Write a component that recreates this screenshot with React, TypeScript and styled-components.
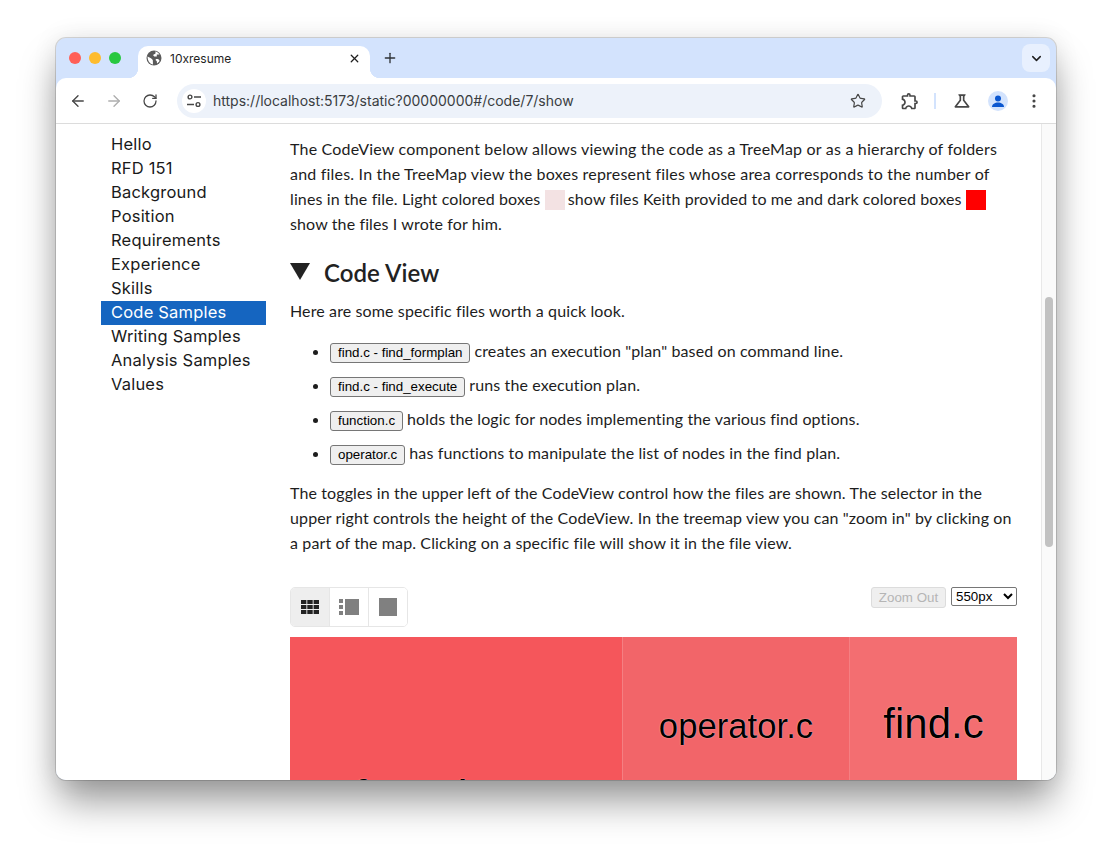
import styled, { createGlobalStyle } from 'styled-components';
import { ArrowLeft, ArrowRight, ChevronDown, EllipsisVertical, Plus, RotateCw, Star, X } from 'lucide-react';
import { MdOutlineExtension, MdOutlineScience } from 'react-icons/md';

const GlobalStyle = createGlobalStyle`
  html, body {
    margin: 0;
    background: #fff;
    overflow: hidden;
  }
`;

const Page = styled.div`
  width: 1112px;
  height: 854px;
  padding: 38px 56px 0;
  box-sizing: border-box;
`;

const WindowFrame = styled.div`
  border-radius: 10px;
  width: 1000px;
  box-shadow: 0 24px 38px -3px rgba(0, 0, 0, 0.4), 0 0 26px rgba(0, 0, 0, 0.09);
`;

const Window = styled.div`
  width: 1000px;
  height: 742px;
  border-radius: 10px;
  overflow: hidden;
  display: flex;
  flex-direction: column;
  background: #d3e3fd;
  box-shadow: 0 0 0 1px rgba(0, 0, 0, 0.14);
`;

const TabStrip = styled.div`
  height: 40px;
  flex: none;
  display: flex;
  align-items: flex-end;
  padding-left: 13px;
  position: relative;
`;

const Lights = styled.div`
  display: flex;
  gap: 8px;
  width: 69px;
  align-self: flex-start;
  padding-top: 14px;
`;

const Light = styled.span<{ $color: string }>`
  width: 12px;
  height: 12px;
  border-radius: 50%;
  background: ${(p) => p.$color};
`;

const Tab = styled.div`
  position: relative;
  width: 232px;
  height: 32px;
  box-sizing: border-box;
  background: #fff;
  border-radius: 10px 10px 0 0;
  display: flex;
  align-items: center;
  padding: 0 9px 8px 8px;
  gap: 8px;
  color: #1f1f1f;

  &::before,
  &::after {
    content: '';
    position: absolute;
    bottom: 0;
    width: 10px;
    height: 10px;
  }
  &::before {
    left: -10px;
    background: radial-gradient(circle at 0 0, transparent 10px, #fff 10.5px);
  }
  &::after {
    right: -10px;
    background: radial-gradient(circle at 100% 0, transparent 10px, #fff 10.5px);
  }
`;

const TabTitle = styled.span`
  flex: 1;
  font: 12px 'Inter', 'Liberation Sans', sans-serif;
  color: #1f1f1f;
`;

const NewTab = styled.span`
  display: flex;
  margin-left: 12px;
  align-self: center;
  color: #2f3337;
`;

const TabSearch = styled.span`
  position: absolute;
  right: 6px;
  top: 6px;
  width: 28px;
  height: 28px;
  border-radius: 8px;
  background: #e8f0fe;
  display: flex;
  align-items: center;
  justify-content: center;
  color: #1f1f1f;
`;

const Toolbar = styled.div`
  height: 46px;
  flex: none;
  box-sizing: border-box;
  background: #fff;
  border-radius: 10px 10px 0 0;
  border-bottom: 1px solid #dcdcdc;
  display: flex;
  align-items: center;
  padding: 0 0 0 13px;
  color: #474747;
`;

const NavIcon = styled.span<{ $off?: boolean; $gap?: number }>`
  display: flex;
  margin-right: ${(p) => p.$gap ?? 0}px;
  color: ${(p) => (p.$off ? '#aeaeae' : '#474747')};
`;

const Omnibox = styled.div`
  width: 705px;
  height: 34px;
  margin: 0 18px 0 19px;
  flex: none;
  box-sizing: border-box;
  padding: 0 16px 0 5px;
  background: #edf2fa;
  border-radius: 17px;
  display: flex;
  align-items: center;
`;

const TuneChip = styled.span`
  width: 24px;
  height: 24px;
  border-radius: 50%;
  background: #fff;
  display: flex;
  align-items: center;
  justify-content: center;
  margin-right: 7px;
`;

const Url = styled.span`
  flex: 1;
  font: 14px 'Inter', 'Liberation Sans', sans-serif;
  color: #3a3d41;
`;

const ToolDivider = styled.span`
  width: 2px;
  height: 16px;
  background: #d3e3fd;
  margin: 0 16px 0 14px;
`;

const Avatar = styled.span`
  width: 20px;
  height: 20px;
  border-radius: 50%;
  background: #d3e3fd;
  margin: 0 17px 0 16px;
  display: flex;
  overflow: hidden;
`;

const Body = styled.div`
  flex: 1;
  min-height: 0;
  background: #fff;
  display: flex;
  overflow: hidden;
`;

const Sidebar = styled.nav`
  width: 165px;
  flex: none;
  margin: 9px 24px 0 45px;
  display: flex;
  flex-direction: column;
`;

const NavItem = styled.div<{ $active?: boolean }>`
  height: 24px;
  padding-left: 10px;
  font: 16.5px/22px 'Inter', sans-serif;
  letter-spacing: 0.2px;
  background: ${(p) => (p.$active ? '#1565c0' : 'transparent')};
  color: ${(p) => (p.$active ? '#fff' : '#1a1a1a')};
`;

const Main = styled.main`
  width: 727px;
  flex: none;
  padding-top: 12px;
  font: 16px/25px 'Lato', sans-serif;
  letter-spacing: 0.12px;
  color: #1d1d1d;
`;

const Para = styled.p<{ $top?: number }>`
  margin: ${(p) => p.$top ?? 0}px 0 0;
  white-space: nowrap;
`;

const WideLines = styled.span`
  letter-spacing: 0.2px;
`;

const Swatch = styled.span<{ $color: string }>`
  display: inline-block;
  width: 20px;
  height: 20px;
  margin-right: -1px;
  vertical-align: -5px;
  background: ${(p) => p.$color};
`;

const Heading = styled.h2`
  margin: 10px 0 0;
  display: flex;
  align-items: center;
  gap: 14px;
  height: 52px;
  font: 600 24px 'Lato', sans-serif;
  letter-spacing: 0.05px;
  color: #222;
`;

const Triangle = styled.span`
  width: 0;
  height: 0;
  margin-top: -2px;
  border-left: 10.5px solid transparent;
  border-right: 10.5px solid transparent;
  border-top: 17px solid #222;
`;

const FileList = styled.ul`
  margin: 11px 0 0;
  padding: 0 0 0 40px;
  list-style: disc;
`;

const FileItem = styled.li`
  height: 34px;
  line-height: 34px;
`;

const FileButton = styled.button`
  height: 20px;
  padding: 0 7px;
  box-sizing: border-box;
  border: 1px solid #767676;
  border-radius: 3px;
  background: #efefef;
  color: #000;
  font: 13.33px 'Liberation Sans', sans-serif;
  margin-right: 4px;
`;

const Controls = styled.div`
  margin-top: 32px;
  display: flex;
  justify-content: space-between;
  align-items: flex-start;
`;

const Toggles = styled.div`
  display: flex;
  border: 1px solid #e6e6e6;
  border-radius: 5px;
  overflow: hidden;
`;

const Toggle = styled.span<{ $active?: boolean }>`
  width: 38px;
  height: 38px;
  display: flex;
  align-items: center;
  justify-content: center;
  background: ${(p) => (p.$active ? '#eeeeee' : '#fff')};
  & + & {
    border-left: 1px solid #e6e6e6;
  }
`;

const RightControls = styled.div`
  display: flex;
  gap: 5px;
`;

const ZoomButton = styled.button`
  width: 75px;
  height: 21px;
  padding: 0;
  border: 1px solid #dcdcdc;
  border-radius: 3px;
  background: #efefef;
  color: #b5b5b5;
  font: 13.33px 'Liberation Sans', sans-serif;
`;

const HeightSelect = styled.select`
  width: 66px;
  height: 19px;
  background: #fff;
  color: #000;
  border: 1px solid #767676;
  border-radius: 2px;
  font: 13.33px 'Liberation Sans', sans-serif;
`;

const TreeMap = styled.div`
  margin-top: 10px;
  height: 550px;
  display: grid;
  grid-template-columns: 332px 227px 168px;
`;

const MapCell = styled.div<{ $bg: string; $height: number; $size: number; $line?: boolean }>`
  height: ${(p) => p.$height}px;
  box-sizing: border-box;
  background: ${(p) => p.$bg};
  border-left: ${(p) => (p.$line ? '1px solid #f57f82' : 'none')};
  display: flex;
  align-items: center;
  justify-content: center;
  font: ${(p) => p.$size}px 'Liberation Sans', sans-serif;
  letter-spacing: 0;
  color: #000;
  text-shadow: 0 0 1px #fff;
`;

const ScrollTrack = styled.div`
  width: 15px;
  flex: none;
  margin-left: 24px;
  box-sizing: border-box;
  border-left: 1px solid #e8e8e8;
  background: #fafafa;
  padding: 173px 3px 0 3px;
`;

const ScrollThumb = styled.div`
  width: 8px;
  height: 250px;
  border-radius: 4px;
  background: #c2c2c2;
`;

const navItems = [
  'Hello',
  'RFD 151',
  'Background',
  'Position',
  'Requirements',
  'Experience',
  'Skills',
  'Code Samples',
  'Writing Samples',
  'Analysis Samples',
  'Values',
];

const files = [
  { name: 'find.c - find_formplan', note: 'creates an execution "plan" based on command line.' },
  { name: 'find.c - find_execute', note: 'runs the execution plan.' },
  { name: 'function.c', note: 'holds the logic for nodes implementing the various find options.' },
  { name: 'operator.c', note: 'has functions to manipulate the list of nodes in the find plan.' },
];

export default function App() {
  return (
    <Page>
      <GlobalStyle />
      <WindowFrame>
        <Window>
          <TabStrip>
            <Lights>
              <Light $color="#ff5f57" />
              <Light $color="#febc2e" />
              <Light $color="#28c840" />
            </Lights>
            <Tab>
              <svg width="16" height="16" viewBox="0 0 16 16">
                <circle cx="8" cy="8" r="7.5" fill="#5a5a5a" />
                <path
                  fill="#fff"
                  d="M1.5 6.5 5 8.2 6.8 10l.2 4.5C4 14 1.6 11 1.5 6.5zM9.5 1.2c1 .6 3.4 1.7 4 3.3h-2.7v1.9H8.2L7 5l2.5-1.5zM10 9h2.2l1.4 1.8c-.7 1.3-1.6 2.1-2.6 2.7l-.2-2.2L9.5 10z"
                />
              </svg>
              <TabTitle>10xresume</TabTitle>
              <X size={13} strokeWidth={2.4} color="#1f1f1f" />
            </Tab>
            <NewTab>
              <Plus size={16} strokeWidth={2} />
            </NewTab>
            <TabSearch>
              <ChevronDown size={15} strokeWidth={2.4} />
            </TabSearch>
          </TabStrip>
          <Toolbar>
            <NavIcon $gap={18}>
              <ArrowLeft size={18} strokeWidth={1.8} />
            </NavIcon>
            <NavIcon $off $gap={19}>
              <ArrowRight size={18} strokeWidth={1.8} />
            </NavIcon>
            <NavIcon>
              <RotateCw size={16} strokeWidth={1.9} />
            </NavIcon>
            <Omnibox>
              <TuneChip>
                <svg width="16" height="14" viewBox="0 0 16 14" fill="none" stroke="#474747" strokeWidth="1.4">
                  <circle cx="4" cy="3" r="1.9" />
                  <path d="M8 3h7M1 10.5h7" />
                  <circle cx="12" cy="10.5" r="1.9" />
                </svg>
              </TuneChip>
              <Url>https://localhost:5173/static?00000000#/code/7/show</Url>
              <Star size={16} strokeWidth={1.8} color="#474747" />
            </Omnibox>
            <MdOutlineExtension size={20} color="#474747" />
            <ToolDivider />
            <MdOutlineScience size={20} color="#474747" />
            <Avatar>
              <svg width="20" height="20" viewBox="0 0 20 20" fill="#0b57d0">
                <circle cx="10" cy="7.5" r="3" />
                <path d="M4 16c0-3 3-4.6 6-4.6s6 1.6 6 4.6z" />
              </svg>
            </Avatar>
            <EllipsisVertical size={18} strokeWidth={2.2} />
          </Toolbar>
          <Body>
            <Sidebar>
              {navItems.map((item) => (
                <NavItem key={item} $active={item === 'Code Samples'}>
                  {item}
                </NavItem>
              ))}
            </Sidebar>
            <Main>
              <Para>
                <WideLines>
                  The CodeView component below allows viewing the code as a TreeMap or as a hierarchy of folders
                  <br />
                  and files. In the TreeMap view the boxes represent files whose area corresponds to the number of
                </WideLines>
                <br />
                lines in the file. Light colored boxes <Swatch $color="#f3e2e3" /> show files Keith provided to me and
                dark colored boxes <Swatch $color="#ff0000" />
                <br />
                show the files I wrote for him.
              </Para>
              <Heading>
                <Triangle />
                Code View
              </Heading>
              <Para>Here are some specific files worth a quick look.</Para>
              <FileList>
                {files.map((file) => (
                  <FileItem key={file.name}>
                    <FileButton>{file.name}</FileButton>
                    {file.note}
                  </FileItem>
                ))}
              </FileList>
              <Para $top={10}>
                The toggles in the upper left of the CodeView control how the files are shown. The selector in the
                <br />
                upper right controls the height of the CodeView. In the treemap view you can "zoom in" by clicking on
                <br />a part of the map. Clicking on a specific file will show it in the file view.
              </Para>
              <Controls>
                <Toggles>
                  <Toggle $active>
                    <svg width="18" height="14" viewBox="0 0 18 14" fill="#222">
                      <path d="M0 0h5.4v4H0zM6.3 0h5.4v4H6.3zM12.6 0H18v4h-5.4zM0 5h5.4v4H0zM6.3 5h5.4v4H6.3zM12.6 5H18v4h-5.4zM0 10h5.4v4H0zM6.3 10h5.4v4H6.3zM12.6 10H18v4h-5.4z" />
                    </svg>
                  </Toggle>
                  <Toggle>
                    <svg width="20" height="16" viewBox="0 0 20 16" fill="#808080">
                      <path d="M0 0h4v4H0zM0 6h4v4H0zM0 12h4v4H0zM6 0h14v16H6z" />
                    </svg>
                  </Toggle>
                  <Toggle>
                    <svg width="18" height="18" viewBox="0 0 18 18" fill="#808080">
                      <path d="M0 0h18v18H0z" />
                    </svg>
                  </Toggle>
                </Toggles>
                <RightControls>
                  <ZoomButton disabled>Zoom Out</ZoomButton>
                  <HeightSelect defaultValue="550px">
                    <option>550px</option>
                  </HeightSelect>
                </RightControls>
              </Controls>
              <TreeMap>
                <MapCell $bg="#f5565b" $height={320} $size={48}>
                  function.c
                </MapCell>
                <MapCell $bg="#f26569" $height={178} $size={34.7} $line>
                  operator.c
                </MapCell>
                <MapCell $bg="#f36e71" $height={174} $size={42} $line>
                  find.c
                </MapCell>
              </TreeMap>
            </Main>
            <ScrollTrack>
              <ScrollThumb />
            </ScrollTrack>
          </Body>
        </Window>
      </WindowFrame>
    </Page>
  );
}
